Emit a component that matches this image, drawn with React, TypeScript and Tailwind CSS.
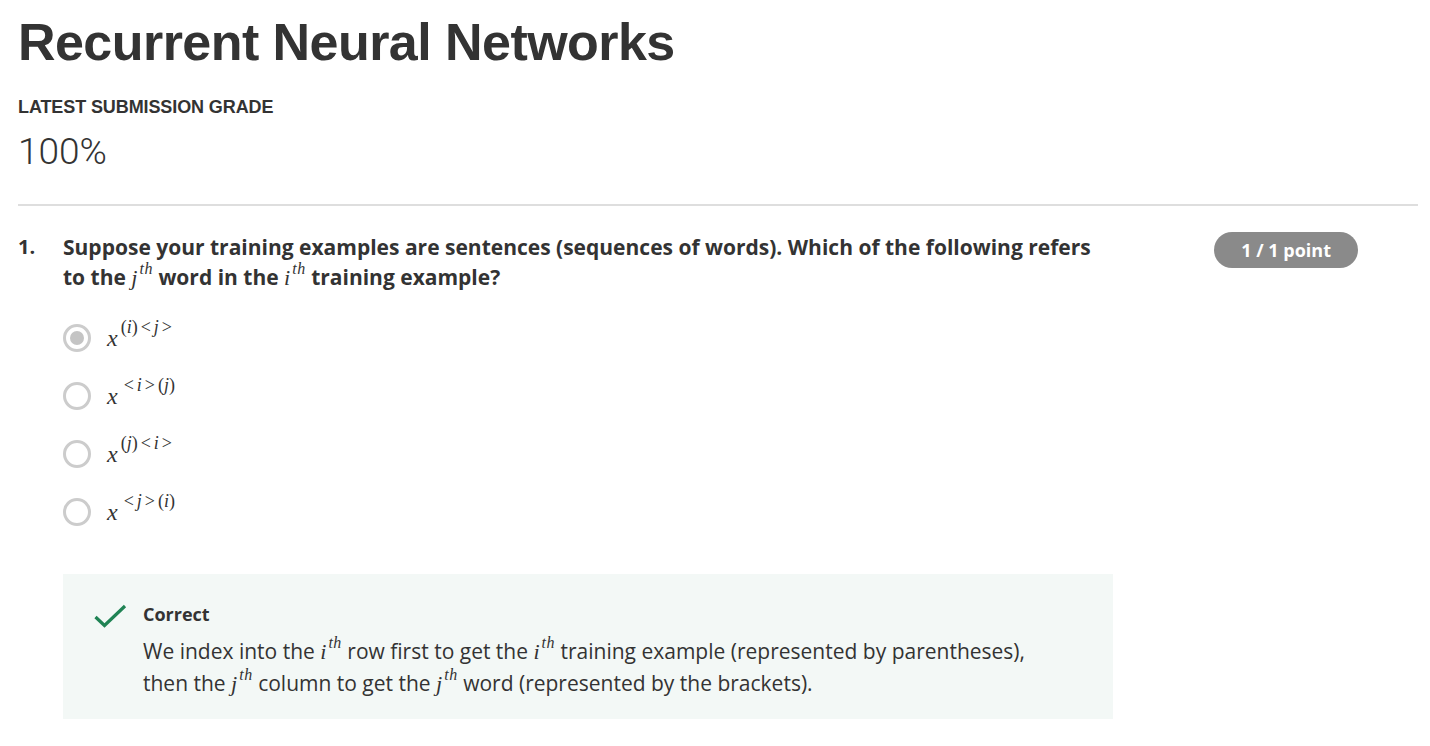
import React from "react";

const serif = "font-['Liberation_Serif','DejaVu_Serif',serif]";

// j^{th} style inline math
const Th: React.FC<{ v: string }> = ({ v }) => (
  <span className={`${serif} whitespace-nowrap font-normal leading-none`}>
    <span className="italic text-[22px] leading-none">{v}</span>
    <sup className="italic text-[16px] leading-none -top-[0.7em] ml-[2px] tracking-[0.5px]">th</sup>
  </span>
);

// x^{...} for the answer options
const XSup: React.FC<{ parts: { t: string; i?: boolean; rel?: boolean }[] }> = ({ parts }) => (
  <span className={`${serif} text-[24px] leading-none text-[#333] whitespace-nowrap`}>
    <span className="italic">x</span>
    <sup className="text-[18px] leading-none -top-[0.75em] ml-[3px]">
      {parts.map((p, k) => (
        <span key={k} className={p.i ? "italic" : p.rel ? "mx-[3px]" : ""}>
          {p.t}
        </span>
      ))}
    </sup>
  </span>
);

const Radio: React.FC<{ checked?: boolean }> = ({ checked }) => (
  <span className="w-[28px] h-[28px] rounded-full border-[3px] border-[#cccccc] bg-white flex items-center justify-center shrink-0">
    {checked && <span className="w-[14px] h-[14px] rounded-full bg-[#c4c4c4]" />}
  </span>
);

const options = [
  {
    checked: true,
    parts: [{ t: "(" }, { t: "i", i: true }, { t: ")" }, { t: "<", rel: true }, { t: "j", i: true }, { t: ">", rel: true }],
  },
  {
    checked: false,
    parts: [{ t: "<", rel: true }, { t: "i", i: true }, { t: ">", rel: true }, { t: "(" }, { t: "j", i: true }, { t: ")" }],
  },
  {
    checked: false,
    parts: [{ t: "(" }, { t: "j", i: true }, { t: ")" }, { t: "<", rel: true }, { t: "i", i: true }, { t: ">", rel: true }],
  },
  {
    checked: false,
    parts: [{ t: "<", rel: true }, { t: "j", i: true }, { t: ">", rel: true }, { t: "(" }, { t: "i", i: true }, { t: ")" }],
  },
];

export default function App() {
  return (
    <div className="w-[1430px] h-[746px] bg-white overflow-hidden pl-[18px] pr-[12px] pt-[12px] text-[#333]">
      <h1 className="font-['Liberation_Sans',Arial,sans-serif] font-bold text-[52px] leading-[60px] tracking-[-0.55px] text-[#333]">
        Recurrent Neural Networks
      </h1>
      <div className="mt-[25px] font-['Liberation_Sans',Arial,sans-serif] font-bold text-[18px] leading-[20px] tracking-[-0.1px]">
        LATEST SUBMISSION GRADE
      </div>
      <div className="mt-[13px] font-['Roboto',sans-serif] font-light text-[37px] leading-[44px] text-[#333]">
        100%
      </div>
      <div className="mt-[30px] h-[2px] bg-[#dedede]" />

      {/* question */}
      <div className="flex mt-[26px] font-['Open_Sans',sans-serif]">
        <div className="w-[45px] shrink-0 font-bold text-[20px] leading-[30px]">1.</div>
        <div className="w-[1050px] shrink-0">
          <p className="font-bold text-[21px] leading-[30px] text-[#333]">
            Suppose your training examples are sentences (sequences of words). Which of the following
            refers to the <Th v="j" /> word in the <Th v="i" /> training example?
          </p>

          <div className="mt-[32px] flex flex-col gap-[30px]">
            {options.map((o, k) => (
              <label key={k} className="flex items-center gap-[16px] h-[28px]">
                <Radio checked={o.checked} />
                <XSup parts={o.parts} />
              </label>
            ))}
          </div>

          <div className="mt-[48px] bg-[#f3f8f6] flex pl-[31px] pt-[26px] pb-[20px] pr-[20px]">
            <svg width="34" height="26" viewBox="0 0 34 26" className="shrink-0 mt-[3px]">
              <polyline
                points="1.5,14 10.5,22.5 31,3"
                fill="none"
                stroke="#1f8354"
                strokeWidth="3.2"
              />
            </svg>
            <div className="ml-[15px]">
              <div className="font-bold text-[18px] leading-[28px] text-[#333]">Correct</div>
              <p className="mt-[7px] text-[21px] leading-[32px] text-[#333]">
                We index into the <Th v="i" /> row first to get the <Th v="i" /> training example
                (represented by parentheses),
                <br />
                then the <Th v="j" /> column to get the <Th v="j" /> word (represented by the brackets).
              </p>
            </div>
          </div>
        </div>
        <div className="flex-1 flex justify-end pr-[60px]">
          <span className="h-[36px] px-[27px] rounded-full bg-[#8a8a8a] text-white font-bold text-[18px] leading-[36px] whitespace-nowrap">
            1 / 1 point
          </span>
        </div>
      </div>
    </div>
  );
}
